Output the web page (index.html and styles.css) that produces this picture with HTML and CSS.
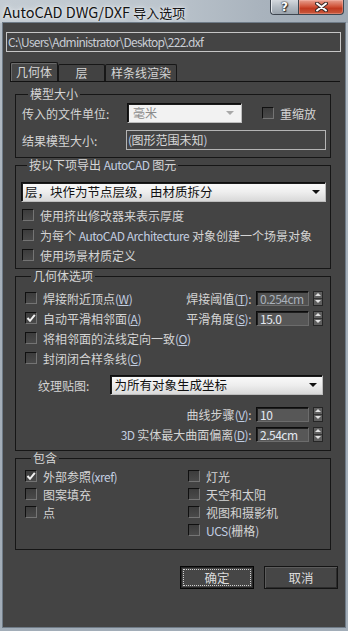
FILE: index.html
```html
<!DOCTYPE html>
<html lang="zh-CN">
<head>
<meta charset="utf-8">
<title>AutoCAD DWG/DXF 导入选项</title>
<link rel="stylesheet" href="styles.css">
</head>
<body>
<div class="win">
  <div class="titlebar">
    <div class="title">AutoCAD DWG/DXF <span class="tcjk">导入选项</span></div>
    <div class="capbtns">
      <div class="cap help">?</div>
      <div class="cap close">
        <svg width="13" height="10" viewBox="0 0 13 10"><path d="M2 1.5 L11 8.5 M11 1.5 L2 8.5" stroke="#3a2a28" stroke-width="4" stroke-linecap="round"/><path d="M2 1.5 L11 8.5 M11 1.5 L2 8.5" stroke="#ffffff" stroke-width="2" stroke-linecap="round"/></svg>
      </div>
    </div>
  </div>
  <div class="client">
    <div class="path">C:\Users\Administrator\Desktop\222.dxf</div>
    <div class="tabs">
      <div class="tab active t1">几何体</div>
      <div class="tab t2">层</div>
      <div class="tab t3">样条线渲染</div>
    </div>
    <div class="panel">
      <fieldset class="g g1">
        <legend>模型大小</legend>
        <div class="row r20">
          <span class="lab1">传入的文件单位:</span>
          <div class="combo dis c1"><span>毫米</span><i class="arr"></i></div>
          <div class="chk rescale"><span class="cb"></span><span>重缩放</span></div>
        </div>
        <div class="row r20 mt7">
          <span class="lab2">结果模型大小:</span>
          <div class="field"><span class="en">(</span>图形范围未知<span class="en">)</span></div>
        </div>
      </fieldset>

      <fieldset class="g g2">
        <legend>按以下项导出 <span class="en">AutoCAD</span> 图元</legend>
        <div class="combo c2"><span>层，块作为节点层级，由材质拆分</span><i class="arr dark"></i></div>
        <div class="list20">
          <div class="chk"><span class="cb"></span><span>使用挤出修改器来表示厚度</span></div>
          <div class="chk"><span class="cb"></span><span>为每个 <span class="en">AutoCAD Architecture</span> 对象创建一个场景对象</span></div>
          <div class="chk"><span class="cb"></span><span>使用场景材质定义</span></div>
        </div>
      </fieldset>

      <fieldset class="g g3">
        <legend>几何体选项</legend>
        <div class="grow">
          <div class="chk"><span class="cb"></span><span>焊接附近顶点<span class="en">(<u>W</u>)</span></span></div>
          <div class="spinrow">
            <span>焊接阈值<span class="en">(<u>T</u>):</span></span>
            <div class="num dim"><span class="en">0.254cm</span></div>
            <div class="arrows"><span class="up"></span><span class="dn"></span></div>
          </div>
        </div>
        <div class="grow">
          <div class="chk"><span class="cb on"><svg width="10" height="10" viewBox="0 0 10 10"><path d="M1.5 5 L4 7.8 L8.8 1.8" fill="none" stroke="#f2f2f2" stroke-width="2"/></svg></span><span>自动平滑相邻面<span class="en">(<u>A</u>)</span></span></div>
          <div class="spinrow">
            <span>平滑角度<span class="en">(<u>S</u>):</span></span>
            <div class="num"><span class="en">15.0</span></div>
            <div class="arrows"><span class="up"></span><span class="dn"></span></div>
          </div>
        </div>
        <div class="grow">
          <div class="chk"><span class="cb"></span><span>将相邻面的法线定向一致<span class="en">(<u>O</u>)</span></span></div>
        </div>
        <div class="grow">
          <div class="chk"><span class="cb"></span><span>封闭闭合样条线<span class="en">(<u>C</u>)</span></span></div>
        </div>
        <div class="texrow">
          <span class="texlab">纹理贴图:</span>
          <div class="combo c3"><span>为所有对象生成坐标</span><i class="arr dark"></i></div>
        </div>
        <div class="curves">
          <div class="spinrow">
            <span>曲线步骤<span class="en">(<u>V</u>):</span></span>
            <div class="num"><span class="en">10</span></div>
            <div class="arrows"><span class="up"></span><span class="dn"></span></div>
          </div>
          <div class="spinrow">
            <span><span class="en">3D</span> 实体最大曲面偏离<span class="en">(<u>D</u>):</span></span>
            <div class="num"><span class="en">2.54cm</span></div>
            <div class="arrows"><span class="up"></span><span class="dn"></span></div>
          </div>
        </div>
      </fieldset>

      <fieldset class="g g4">
        <legend>包含</legend>
        <div class="incl">
          <div class="chk"><span class="cb on"><svg width="10" height="10" viewBox="0 0 10 10"><path d="M1.5 5 L4 7.8 L8.8 1.8" fill="none" stroke="#f2f2f2" stroke-width="2"/></svg></span><span>外部参照<span class="en">(xref)</span></span></div>
          <div class="chk"><span class="cb"></span><span>灯光</span></div>
          <div class="chk"><span class="cb"></span><span>图案填充</span></div>
          <div class="chk"><span class="cb"></span><span>天空和太阳</span></div>
          <div class="chk"><span class="cb"></span><span>点</span></div>
          <div class="chk"><span class="cb"></span><span>视图和摄影机</span></div>
          <div></div>
          <div class="chk"><span class="cb"></span><span><span class="en">UCS(</span>栅格<span class="en">)</span></span></div>
        </div>
      </fieldset>
    </div>
    <div class="buttons">
      <div class="btn default"><div class="focus">确定</div></div>
      <div class="btn">取消</div>
    </div>
  </div>
</div>
</body>
</html>
```

FILE: styles.css
```css
* { box-sizing: border-box; }
html, body { margin: 0; padding: 0; }
body {
  width: 348px;
  height: 631px;
  overflow: hidden;
  font-family: "Noto Sans CJK SC", "Noto Sans", sans-serif;
  font-size: 12px;
  color: #d4d4d4;
  background: #a9b3bd;
}
.win {
  width: 348px;
  height: 631px;
  display: flex;
  flex-direction: column;
  background: linear-gradient(180deg, #b6bfc8 0%, #a7b1bb 40%, #a2adb8 100%);
}
.titlebar {
  height: 23px;
  display: flex;
  justify-content: space-between;
  align-items: flex-start;
  background: linear-gradient(90deg, #c4ccd3 0%, #bcc5cd 45%, #a9b3bd 75%, #9ea9b4 100%);
}
.title {
  padding-left: 3px;
  font-size: 14.5px;
  line-height: 24px;
  color: #141414;
  text-shadow: 0 0 6px #eef1f4, 0 0 3px #f4f6f8;
  white-space: nowrap;
}
.tcjk { font-size: 13px; }
.capbtns { display: flex; margin-right: 4px; }
.cap {
  height: 15px;
  display: flex;
  align-items: center;
  justify-content: center;
  border: 1px solid #3e4650;
  border-top: none;
}
.help {
  width: 28px;
  border-radius: 0 0 0 4px;
  border-right: none;
  background: linear-gradient(180deg, #d4d9de 0%, #b2bac2 50%, #9aa3ac 100%);
  color: #fff;
  font-weight: bold;
  font-size: 12px;
  font-family: "DejaVu Sans", sans-serif;
  line-height: 14px;
  text-shadow: 0 0 1px #222, 0 0 2px #222, 1px 1px 1px #333;
  box-shadow: inset 1px 0 0 #e6eaee;
}
.close {
  width: 46px;
  border-radius: 0 0 4px 0;
  background: linear-gradient(180deg, #e7a090 0%, #d1563c 45%, #c13a20 60%, #c85a3e 100%);
  box-shadow: inset 0 0 0 1px rgba(255,200,190,0.35);
}
.close svg { display: block; }

.client {
  flex: 1;
  margin: 0 3px 4px 3px;
  background: #444444;
  display: flex;
  flex-direction: column;
  box-shadow: 0 0 0 1px #6f7b87;
}
.en { color: #c2cde0; letter-spacing: -0.5px; }
u { text-decoration-thickness: 1px; text-underline-offset: 1px; }

.path {
  margin: 9px 4px 0 3px;
  height: 20px;
  border: 1px solid #c6c6c6;
  padding-left: 1px;
  line-height: 17px;
  font-size: 12px;
  letter-spacing: -0.75px;
  color: #c9cdd4;
  white-space: nowrap;
}
.tabs {
  margin: 10px 5px 0 7px;
  height: 20px;
  display: flex;
  align-items: flex-end;
  border-bottom: 1px solid #121212;
}
.tab {
  height: 17px;
  border: 1px solid #171717;
  border-bottom: none;
  border-radius: 2px 2px 0 0;
  text-align: center;
  line-height: 16px;
  background: #424242;
  color: #d6d6d6;
}
.tab.active {
  height: 19px;
  background: #464646;
  box-shadow: inset 1px 1px 0 #6a6a6a;
  line-height: 18px;
}
.t1 { width: 48px; }
.t2 { width: 47px; }
.t3 { width: 72px; }

.panel {
  margin: 5px 14px 0 12px;
  display: flex;
  flex-direction: column;
}
.g {
  margin: 0;
  padding: 0;
  border: 1px solid #161616;
  min-width: 0;
}
legend {
  margin-left: 6px;
  padding: 0 2px;
  height: 14px;
  line-height: 14px;
  font-size: 12px;
  color: #d6d6d6;
}
.row { display: flex; align-items: center; }
.r20 { height: 20px; }
.mt7 { margin-top: 7px; }

.g1 { padding: 2px 4px 7px 6px; }
.lab1 { width: 105px; white-space: nowrap; }
.lab2 { width: 104px; white-space: nowrap; }

.combo {
  height: 20px;
  display: flex;
  align-items: center;
  justify-content: space-between;
  border: 1px solid;
  border-color: #0e0e0e #bdbdbd #bdbdbd #0e0e0e;
  box-shadow: inset 1px 1px 0 #1c1c1c;
  background: linear-gradient(180deg, #fafafa 0%, #eeeeee 50%, #d9d9d9 100%);
  color: #111;
  padding: 0 4px 0 3px;
  line-height: 18px;
  white-space: nowrap;
}
.combo.dis {
  background: #f2f2f2;
  color: #8c8c8c;
  padding-left: 5px;
}
.arr {
  width: 0;
  height: 0;
  border-left: 4px solid transparent;
  border-right: 4px solid transparent;
  border-top: 4px solid #a8a8a8;
  margin-right: 3px;
}
.arr.dark { border-top-color: #111; margin-right: 1px; }
.c1 { width: 115px; }
.c2 { width: 305px; font-size: 12.5px; }
.c3 { width: 214px; font-size: 12.5px; }

.chk {
  display: flex;
  align-items: center;
  gap: 6px;
  white-space: nowrap;
}
.cb {
  width: 12px;
  height: 12px;
  flex: none;
  border: 1px solid;
  border-color: #101010 #747474 #747474 #101010;
  background: linear-gradient(180deg, #3c3c3c 0%, #4a4a4a 100%);
  display: flex;
  align-items: center;
  justify-content: center;
}
.cb svg { display: block; }
.rescale { margin-left: 20px; }

.field {
  width: 200px;
  height: 20px;
  border: 1px solid #b4b4b4;
  padding-left: 1px;
  line-height: 18px;
  color: #d8d8d8;
}

.g2 { padding: 10px 4px 3px 5px; }
.list20 { margin-top: 3px; display: flex; flex-direction: column; padding-left: 1px; }
.list20 .chk { height: 20px; }

.g3 { padding: 5px 7px 6px 9px; }
.grow {
  height: 20px;
  display: flex;
  align-items: center;
  justify-content: space-between;
}
.spinrow {
  display: flex;
  align-items: center;
  white-space: nowrap;
}
.num {
  width: 53px;
  height: 15px;
  margin-left: 5px;
  border: 1px solid;
  border-color: #0c0c0c #6c6c6c #6c6c6c #0c0c0c;
  box-shadow: inset 1px 1px 0 #1e1e1e;
  background: #575757;
  padding-left: 3px;
  line-height: 13px;
  font-size: 12px;
}
.num .en { color: #e4e9f2; }
.num.dim { background: #505050; }
.num.dim .en { color: #a9b0ba; }
.arrows {
  width: 10px;
  height: 15px;
  margin-left: 4px;
  display: flex;
  flex-direction: column;
  border: 1px solid #262626;
  background: #5f5f5f;
}
.arrows span {
  flex: 1;
  display: flex;
  align-items: center;
  justify-content: center;
}
.arrows .up { border-bottom: 1px solid #333; }
.arrows .up::after {
  content: "";
  border-left: 3px solid transparent;
  border-right: 3px solid transparent;
  border-bottom: 3px solid #e0e0e0;
}
.arrows .dn::after {
  content: "";
  border-left: 3px solid transparent;
  border-right: 3px solid transparent;
  border-top: 3px solid #e0e0e0;
}
.texrow {
  margin-top: 7px;
  height: 20px;
  display: flex;
  align-items: center;
}
.texlab { margin-left: 13px; width: 73px; }
.curves {
  margin-top: 9px;
  display: flex;
  flex-direction: column;
  align-items: flex-end;
}
.curves .spinrow { height: 20px; }

.g4 { padding: 2px 4px 10px 9px; }
.incl {
  display: grid;
  grid-template-columns: 163px 1fr;
  grid-auto-rows: 18px;
}

.buttons {
  margin: 16px 7px 0 0;
  display: flex;
  justify-content: flex-end;
  gap: 10px;
}
.btn {
  width: 74px;
  height: 23px;
  border: 1px solid #141414;
  background: #464646;
  box-shadow: inset 1px 1px 0 #5c5c5c, inset -1px -1px 0 #2c2c2c;
  display: flex;
  align-items: center;
  justify-content: center;
  color: #dcdcdc;
  font-size: 12.5px;
}
.btn.default {
  padding: 2px;
  border-color: #050505;
  box-shadow: inset 0 0 0 1px #262626;
}
.focus {
  width: 100%;
  height: 100%;
  border: 1px dotted #d0d0d0;
  display: flex;
  align-items: center;
  justify-content: center;
}
```
